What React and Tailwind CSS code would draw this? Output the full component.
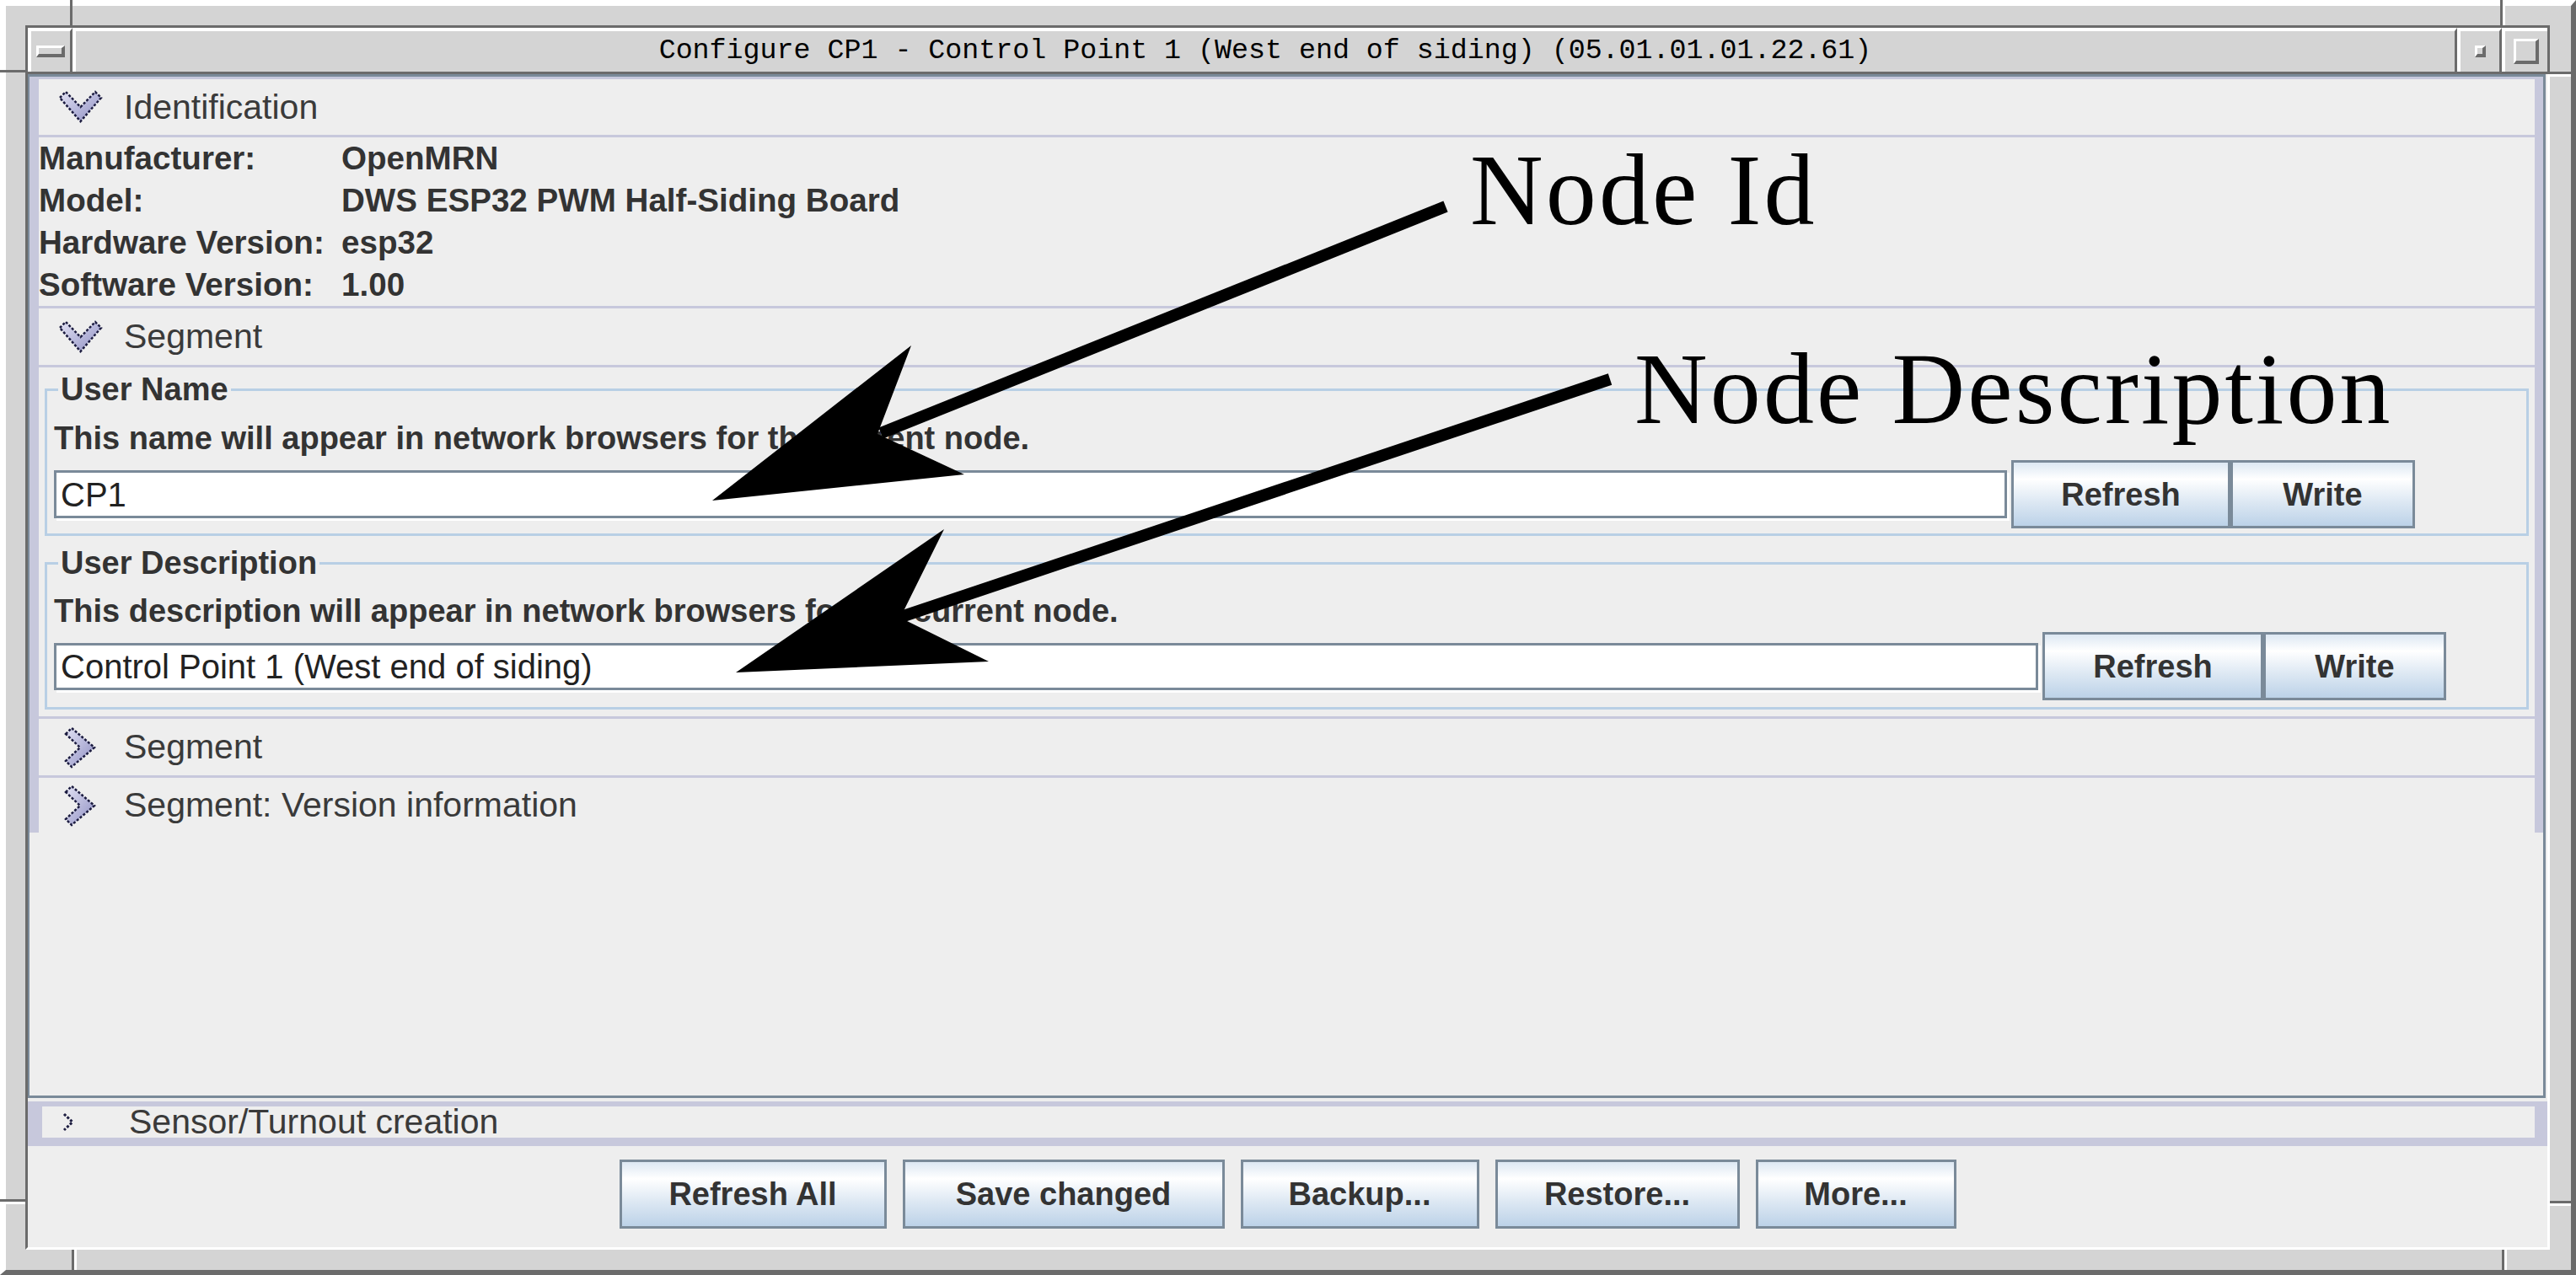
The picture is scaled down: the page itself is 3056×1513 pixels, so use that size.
import React from 'react';

// Metal/Ocean style pieces for the JMRI "Configure" window

function ExpandedIcon() {
  return (
    <svg width="53" height="40" viewBox="0 0 53 40" className="shrink-0">
      <defs>
        <linearGradient id="chevFill" x1="0" y1="0" x2="1" y2="1">
          <stop offset="0" stopColor="#e2e2f4" />
          <stop offset="1" stopColor="#8e8ec2" />
        </linearGradient>
      </defs>
      <polygon
        points="2,9 9,2 26.5,20 44,2 51,9 26.5,37"
        fill="url(#chevFill)"
        stroke="#1c1c40"
        strokeWidth="2.5"
        strokeDasharray="3 2"
      />
    </svg>
  );
}

function CollapsedIcon() {
  return (
    <svg width="38" height="50" viewBox="0 0 38 50" className="shrink-0">
      <defs>
        <linearGradient id="chevFillR" x1="0" y1="0" x2="1" y2="1">
          <stop offset="0" stopColor="#e2e2f4" />
          <stop offset="1" stopColor="#8e8ec2" />
        </linearGradient>
      </defs>
      <polygon
        points="2,9 9,2 36,25 9,48 2,41 19,25"
        fill="url(#chevFillR)"
        stroke="#1c1c40"
        strokeWidth="2.5"
        strokeDasharray="3 2"
      />
    </svg>
  );
}

function SmallChevron() {
  return (
    <svg width="21" height="27" viewBox="0 0 21 27" className="shrink-0">
      <polyline points="5,4 15,13.5 5,23" fill="none" stroke="#1c1c40" strokeWidth="3" strokeDasharray="3 2" />
    </svg>
  );
}

function Separator() {
  return <div className="h-[3px] bg-[#c7c8dc]" />;
}

function OpenHeader({ label, h }) {
  return (
    <div className={`flex items-center pl-[23px] gap-[25px] ${h}`}>
      <ExpandedIcon />
      <span className="text-[41px] leading-none text-[#3a3a3a]">{label}</span>
    </div>
  );
}

function ClosedHeader({ label, h }) {
  return (
    <div className={`flex items-center pl-[30px] gap-[33px] ${h}`}>
      <CollapsedIcon />
      <span className="text-[41px] leading-none text-[#3a3a3a]">{label}</span>
    </div>
  );
}

function MetalButton({ w, h = 'h-[81px]', children }) {
  return (
    <div
      className={`${w} ${h} shrink-0 flex items-center justify-center border-[3px] border-[#7a8a99] bg-[linear-gradient(to_bottom,#dde8f3_0%,#ffffff_26%,#dde8f3_62%,#bcd2e8_100%)] text-[38px] font-bold leading-none text-[#333333]`}
    >
      {children}
    </div>
  );
}

function TextField({ w, h, value }) {
  return (
    <div
      className={`${w} ${h} shrink-0 flex items-center bg-white border-[3px] border-[#7a8a99] shadow-[3px_3px_0_0_#ffffff] pl-[5px] text-[40px] leading-none text-[#222222]`}
    >
      {value}
    </div>
  );
}

const info = [
  ['Manufacturer:', 'OpenMRN'],
  ['Model:', 'DWS ESP32 PWM Half-Siding Board'],
  ['Hardware Version:', 'esp32'],
  ['Software Version:', '1.00'],
];

export default function App() {
  return (
    <div className="relative w-[3056px] h-[1513px] overflow-hidden bg-white font-['Liberation_Sans',Arial,sans-serif]">
      {/* window manager frame */}
      <div className="flex h-full w-full flex-col border-t-[7px] border-l-[7px] border-r-[6px] border-b-[6px] border-t-white border-l-white border-r-[#6b6b6b] border-b-[#6b6b6b] bg-[#d4d4d4] pt-[23px] pl-[23px] pr-[25px] pb-[24px]">
        {/* title bar */}
        <div className="flex h-[58px] shrink-0 border-[3px] border-[#6b6b6b]">
          <div className="flex w-[53px] items-center justify-center border-t-[4px] border-l-[4px] border-r-[3px] border-t-white border-l-white border-r-[#6b6b6b]">
            <div className="h-[14px] w-[34px] border-t-[3px] border-l-[3px] border-b-[4px] border-r-[4px] border-t-white border-l-white border-b-[#6b6b6b] border-r-[#6b6b6b]" />
          </div>
          <div className="flex flex-1 items-center justify-center border-t-[4px] border-l-[4px] border-r-[3px] border-t-white border-l-white border-r-[#6b6b6b] font-['Liberation_Mono',monospace] text-[33.3px] leading-none text-black">
            Configure CP1 - Control Point 1 (West end of siding) (05.01.01.01.22.61)
          </div>
          <div className="flex w-[53px] items-center justify-center border-t-[4px] border-l-[4px] border-r-[3px] border-t-white border-l-white border-r-[#6b6b6b]">
            <div className="h-[14px] w-[13px] border-t-[3px] border-l-[3px] border-b-[4px] border-r-[4px] border-t-white border-l-white border-b-[#6b6b6b] border-r-[#6b6b6b]" />
          </div>
          <div className="flex w-[54px] items-center justify-center border-t-[4px] border-l-[4px] border-t-white border-l-white">
            <div className="h-[30px] w-[30px] border-t-[3px] border-l-[3px] border-b-[4px] border-r-[4px] border-t-white border-l-white border-b-[#6b6b6b] border-r-[#6b6b6b]" />
          </div>
        </div>

        {/* window content */}
        <div className="flex flex-1 flex-col bg-[#eeeeee] border-l-[3px] border-r-[3px] border-b-[3px] border-l-[#6b6b6b] border-r-white border-b-white">
          {/* scroll pane */}
          <div className="mr-[2px] h-[1215px] shrink-0 border-[3px] border-l-[2px] border-[#7a8a99]">
            <div className="flex flex-col border-t-[3px] border-l-[11px] border-r-[10px] border-[#c7c8dc]">
              <OpenHeader label="Identification" h="h-[66px]" />
              <Separator />
              <div className="grid grid-cols-[359px_1fr] text-[38.6px] font-bold leading-none text-[#333333]">
                {info.map(([k, v]) => (
                  <React.Fragment key={k}>
                    <div className="flex h-[50px] items-center whitespace-nowrap">{k}</div>
                    <div className="flex h-[50px] items-center whitespace-nowrap">{v}</div>
                  </React.Fragment>
                ))}
              </div>
              <Separator />
              <OpenHeader label="Segment" h="h-[67px]" />
              <Separator />

              <div className="flex h-[414px] flex-col px-[7px]">
                <fieldset className="mt-[2px] border-[3px] border-[#b8cfe5] pl-[8px] pb-[6px]">
                  <legend className="ml-[5px] px-[3px] text-[38px] font-bold leading-[48px] text-[#333333]">User Name</legend>
                  <div className="mt-[14px] text-[38px] font-bold leading-[40px] text-[#333333]">
                    This name will appear in network browsers for the current node.
                  </div>
                  <div className="mt-[6px] flex items-center">
                    <TextField w="w-[2317px]" h="h-[57px]" value="CP1" />
                    <div className="ml-[5px] flex">
                      <MetalButton w="w-[260px]">Refresh</MetalButton>
                      <MetalButton w="w-[219px]">Write</MetalButton>
                    </div>
                  </div>
                </fieldset>

                <fieldset className="mt-[8px] border-[3px] border-[#b8cfe5] pl-[8px] pb-[8px]">
                  <legend className="ml-[5px] px-[3px] text-[38px] font-bold leading-[48px] text-[#333333]">User Description</legend>
                  <div className="mt-[13px] text-[38px] font-bold leading-[40px] text-[#333333]">
                    This description will appear in network browsers for the current node.
                  </div>
                  <div className="mt-[5px] flex items-center">
                    <TextField w="w-[2354px]" h="h-[56px]" value="Control Point 1 (West end of siding)" />
                    <div className="ml-[5px] flex">
                      <MetalButton w="w-[262px]">Refresh</MetalButton>
                      <MetalButton w="w-[217px]">Write</MetalButton>
                    </div>
                  </div>
                </fieldset>
              </div>

              <Separator />
              <ClosedHeader label="Segment" h="h-[67px]" />
              <Separator />
              <ClosedHeader label="Segment: Version information" h="h-[65px]" />
            </div>
          </div>

          {/* collapsed Sensor/Turnout creation panel */}
          <div className="mt-[4px] flex h-[53px] shrink-0 bg-[#c7c8dc] pl-[17px] pr-[15px] pt-[6px] pb-[10px]">
            <div className="flex flex-1 items-center bg-[#eeeeee] pl-[21px] gap-[61px]">
              <SmallChevron />
              <span className="text-[41px] leading-none text-[#3a3a3a]">Sensor/Turnout creation</span>
            </div>
          </div>

          {/* bottom button row */}
          <div className="mt-[16px] flex justify-center gap-[19px]">
            <MetalButton w="w-[317px]" h="h-[82px]">Refresh All</MetalButton>
            <MetalButton w="w-[382px]" h="h-[82px]">Save changed</MetalButton>
            <MetalButton w="w-[283px]" h="h-[82px]">Backup...</MetalButton>
            <MetalButton w="w-[290px]" h="h-[82px]">Restore...</MetalButton>
            <MetalButton w="w-[238px]" h="h-[82px]">More...</MetalButton>
          </div>
        </div>
      </div>

      {/* resize grooves on the frame corners */}
      <div className="absolute left-[83px] top-0 h-[30px] w-[3px] bg-[#6b6b6b]" />
      <div className="absolute left-0 top-[83px] h-[3px] w-[30px] bg-[#6b6b6b]" />
      <div className="absolute left-[2966px] top-0 h-[30px] w-[3px] bg-[#6b6b6b]" />
      <div className="absolute left-[2969px] top-[7px] h-[23px] w-[3px] bg-white" />
      <div className="absolute left-[3025px] top-[85px] h-[3px] w-[31px] bg-[#6b6b6b]" />
      <div className="absolute left-[3025px] top-[88px] h-[3px] w-[25px] bg-white" />
      <div className="absolute left-0 top-[1423px] h-[3px] w-[30px] bg-[#6b6b6b]" />
      <div className="absolute left-[7px] top-[1426px] h-[3px] w-[23px] bg-white" />
      <div className="absolute left-[85px] top-[1483px] h-[30px] w-[3px] bg-[#6b6b6b]" />
      <div className="absolute left-[88px] top-[1483px] h-[24px] w-[3px] bg-white" />
      <div className="absolute left-[3025px] top-[1425px] h-[3px] w-[31px] bg-[#6b6b6b]" />
      <div className="absolute left-[3025px] top-[1428px] h-[3px] w-[25px] bg-white" />
      <div className="absolute left-[2968px] top-[1483px] h-[30px] w-[3px] bg-[#6b6b6b]" />
      <div className="absolute left-[2971px] top-[1483px] h-[24px] w-[3px] bg-white" />

      {/* annotation arrows */}
      <svg className="pointer-events-none absolute left-0 top-0" width="3056" height="1513" viewBox="0 0 3056 1513">
        <line x1="1715" y1="245" x2="1045" y2="514" stroke="#000" strokeWidth="14" />
        <polygon points="845,594 1081,410 1041,515 1144,563" fill="#000" />
        <line x1="1910" y1="450" x2="1060" y2="735" stroke="#000" strokeWidth="14" />
        <polygon points="873,798 1120,628 1068,733 1173,785" fill="#000" />
      </svg>
      <div className="pointer-events-none absolute left-[1744px] top-[166px] whitespace-nowrap font-['Liberation_Serif',serif] text-[120px] leading-[120px] tracking-[0.026em] text-black">
        Node Id
      </div>
      <div className="pointer-events-none absolute left-[1939px] top-[402px] whitespace-nowrap font-['Liberation_Serif',serif] text-[120px] leading-[120px] tracking-[0.026em] text-black">
        Node Description
      </div>
    </div>
  );
}
